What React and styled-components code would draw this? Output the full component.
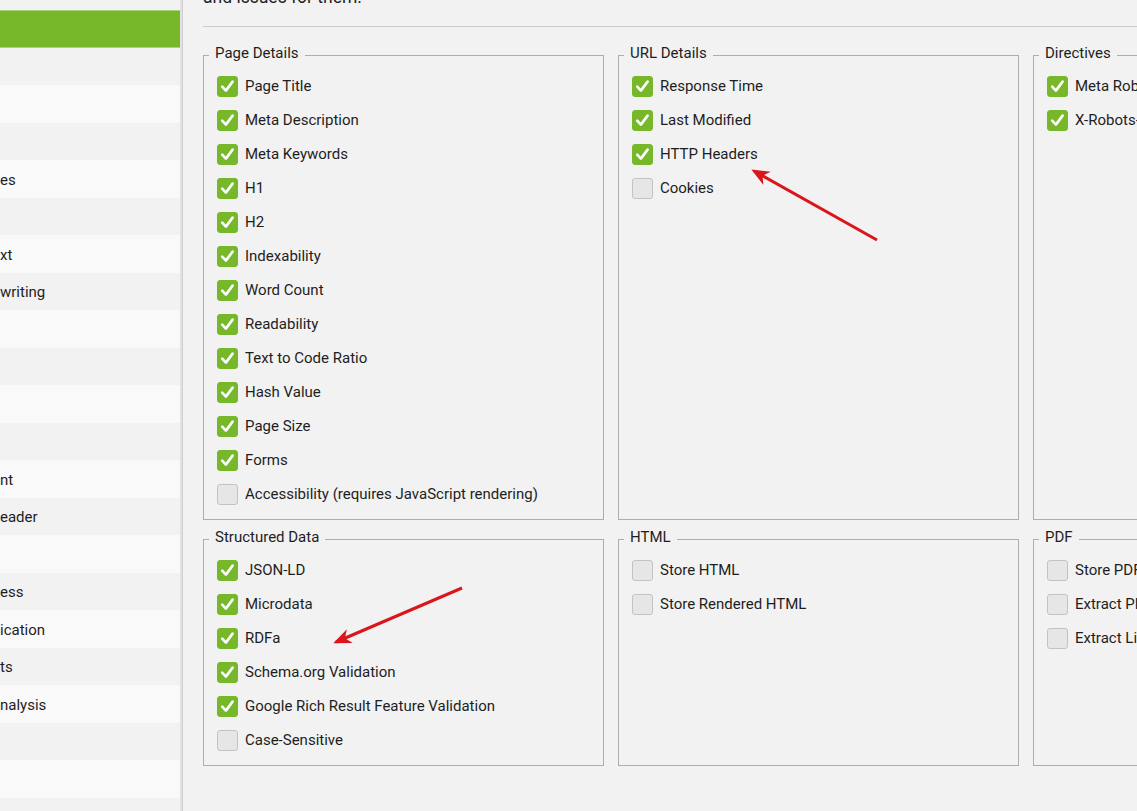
import React from "react";
import styled, { createGlobalStyle } from "styled-components";

const Global = createGlobalStyle`
  html, body { margin: 0; padding: 0; background: #f2f2f2; }
  body { font-family: Roboto, "Noto Sans", Arial, sans-serif; color: #1e1e1e; overflow: hidden; }
  * { box-sizing: border-box; }
`;

const Page = styled.div`
  position: relative;
  display: flex;
  width: 1137px;
  height: 811px;
  overflow: hidden;
  background: #f2f2f2;
`;

const Sidebar = styled.nav`
  flex: 0 0 183px;
  display: flex;
  flex-direction: column;
  border-right: 1px solid #cfcfcf;
  box-shadow: inset -2px 0 0 #e2e2e2;
  padding-right: 2px;
`;

const NavItem = styled.div`
  flex: 0 0 ${(p) => p.$h || 37.5}px;
  display: flex;
  align-items: center;
  padding-top: 2px;
  font-size: 15px;
  white-space: nowrap;
  overflow: hidden;
  background: ${(p) => (p.$active ? "#76b82a" : p.$alt ? "#f9f9f9" : "#f2f2f2")};
  border-top: ${(p) => (p.$active ? "1px solid #a9d27a" : "none")};
  border-bottom: ${(p) => (p.$active ? "1px solid #a9d27a" : "none")};
  color: ${(p) => (p.$active ? "#fff" : "#1e1e1e")};
`;

const Main = styled.main`
  flex: 1;
  min-width: 0;
  padding-left: 20px;
  overflow: hidden;
`;

const Intro = styled.p`
  margin: -13px 0 0;
  font-size: 17.5px;
  line-height: 20px;
  white-space: nowrap;
`;

const Rule = styled.div`
  height: 1px;
  background: #cbcbcb;
  margin-top: 19px;
`;

const Grid = styled.div`
  display: grid;
  grid-template-columns: repeat(3, 401px);
  column-gap: 14px;
  row-gap: 8px;
  margin-top: 17px;
`;

const Group = styled.fieldset`
  margin: 0;
  min-width: 0;
  border: 1px solid #adadad;
  padding: 3px 13px 8px 13px;
  display: flex;
  flex-direction: column;
`;

const Legend = styled.legend`
  font-size: 15px;
  line-height: 18px;
  padding: 0 6px 4px;
  margin-left: -8px;
  color: #1e1e1e;
`;

const Option = styled.label`
  height: 34px;
  display: flex;
  align-items: center;
  gap: 7px;
  font-size: 15px;
  white-space: nowrap;
`;

const Box = styled.span`
  flex: 0 0 21px;
  width: 21px;
  height: 21px;
  border-radius: 3px;
  display: flex;
  align-items: center;
  justify-content: center;
  background: ${(p) => (p.$on ? "#76b82a" : "#e6e6e6")};
  border: 1px solid ${(p) => (p.$on ? "#76b82a" : "#c3c3c3")};
`;

const Overlay = styled.svg`
  position: absolute;
  inset: 0;
  pointer-events: none;
`;

const Check = () => (
  <svg width="17" height="17" viewBox="0 0 17 17">
    <path d="M3.2 8.6 L6.9 12.6 L13.6 3.6" fill="none" stroke="#fff" strokeWidth="2.6" strokeLinecap="round" strokeLinejoin="round" />
  </svg>
);

const CheckOption = ({ on, children }) => (
  <Option>
    <Box $on={on}>{on && <Check />}</Box>
    {children}
  </Option>
);

const nav = [
  { t: "", h: 10 },
  { t: "", active: true },
  { t: "" }, { t: "" }, { t: "" }, { t: "es" }, { t: "" }, { t: "xt" }, { t: "writing" },
  { t: "" }, { t: "" }, { t: "" }, { t: "" }, { t: "nt" }, { t: "eader" }, { t: "" },
  { t: "ess" }, { t: "ication" }, { t: "ts" }, { t: "nalysis" }, { t: "" }, { t: "" }, { t: "" },
];

const groups = [
  {
    title: "Page Details",
    items: [
      ["Page Title", 1], ["Meta Description", 1], ["Meta Keywords", 1], ["H1", 1], ["H2", 1],
      ["Indexability", 1], ["Word Count", 1], ["Readability", 1], ["Text to Code Ratio", 1],
      ["Hash Value", 1], ["Page Size", 1], ["Forms", 1], ["Accessibility (requires JavaScript rendering)", 0],
    ],
  },
  {
    title: "URL Details",
    items: [["Response Time", 1], ["Last Modified", 1], ["HTTP Headers", 1], ["Cookies", 0]],
  },
  {
    title: "Directives",
    items: [["Meta Robots", 1], ["X-Robots-Tag", 1]],
  },
  {
    title: "Structured Data",
    items: [
      ["JSON-LD", 1], ["Microdata", 1], ["RDFa", 1], ["Schema.org Validation", 1],
      ["Google Rich Result Feature Validation", 1], ["Case-Sensitive", 0],
    ],
  },
  {
    title: "HTML",
    items: [["Store HTML", 0], ["Store Rendered HTML", 0]],
  },
  {
    title: "PDF",
    items: [["Store PDF", 0], ["Extract PDF Properties", 0], ["Extract Links from PDFs", 0]],
  },
];

export default function App() {
  return (
    <>
      <Global />
      <Page>
        <Sidebar>
          {nav.map((n, i) => (
            <NavItem key={i} $h={n.h} $active={n.active} $alt={i % 2 === 1}>
              {n.t}
            </NavItem>
          ))}
        </Sidebar>
        <Main>
          <Intro>and issues for them.</Intro>
          <Rule />
          <Grid>
            {groups.map((g) => (
              <Group key={g.title}>
                <Legend>{g.title}</Legend>
                {g.items.map(([label, on]) => (
                  <CheckOption key={label} on={!!on}>{label}</CheckOption>
                ))}
              </Group>
            ))}
          </Grid>
        </Main>
        <Overlay width="1137" height="811" viewBox="0 0 1137 811">
          <defs>
            <marker id="ah" viewBox="0 0 12 10" refX="10" refY="5" markerWidth="6" markerHeight="6" orient="auto-start-reverse" markerUnits="strokeWidth">
              <path d="M0 0 L12 5 L0 10 L3.5 5 Z" fill="#d9161c" />
            </marker>
          </defs>
          <line x1="877" y1="240" x2="754" y2="171" stroke="#d9161c" strokeWidth="3" markerEnd="url(#ah)" />
          <line x1="462" y1="588" x2="336" y2="642" stroke="#d9161c" strokeWidth="3" markerEnd="url(#ah)" />
        </Overlay>
      </Page>
    </>
  );
}
